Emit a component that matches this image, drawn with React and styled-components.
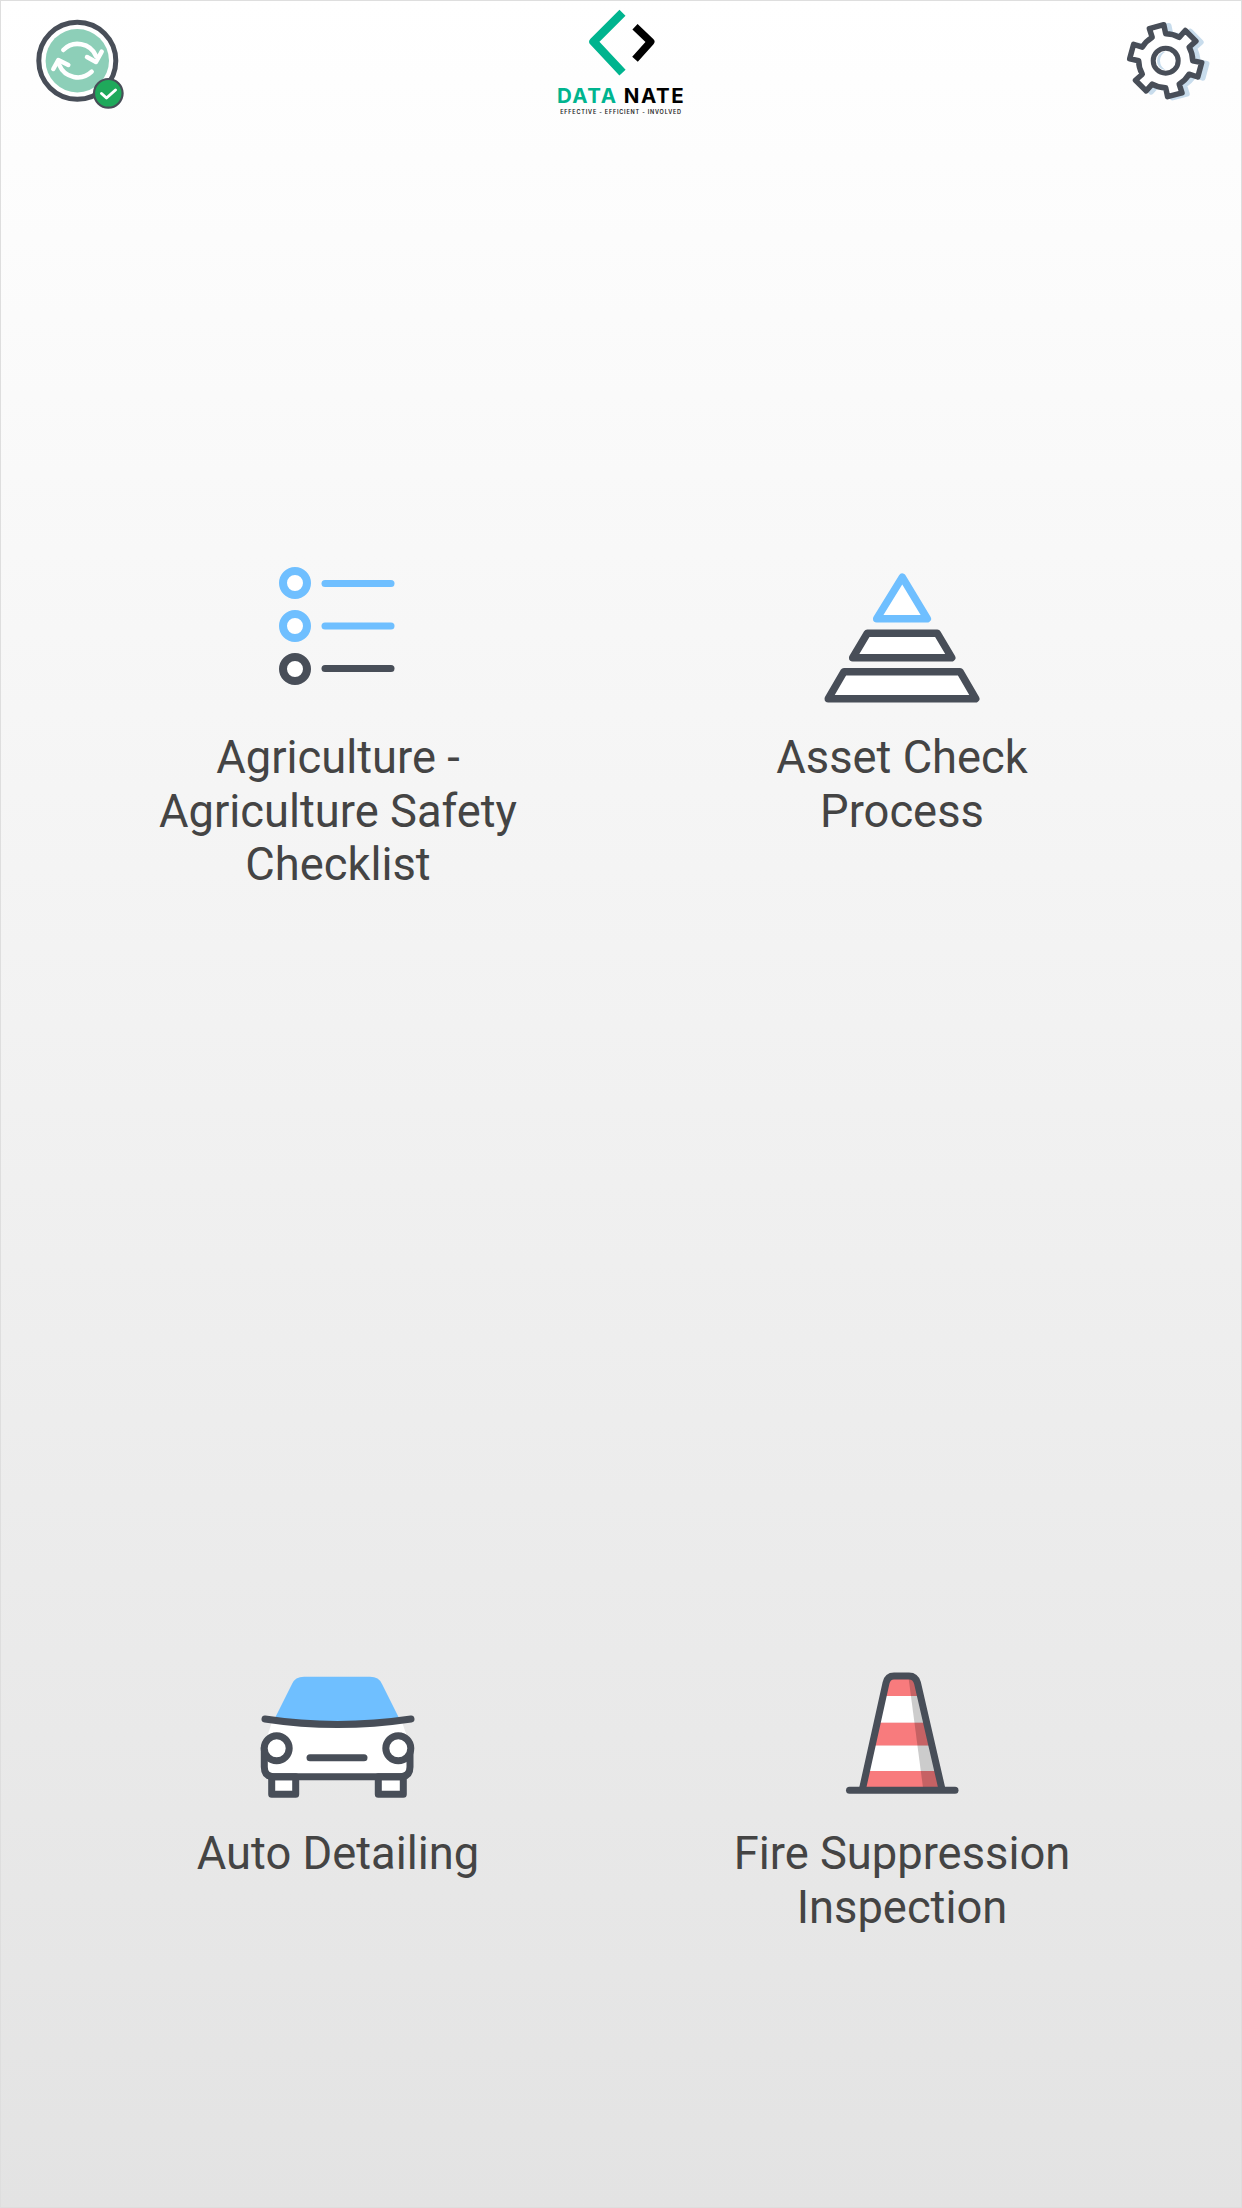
import React from 'react';
import styled, { createGlobalStyle } from 'styled-components';

const DARK = '#484e58';
const BLUE = '#6fbfff';
const RED = '#f87b7d';

const GlobalStyle = createGlobalStyle`
  html, body {
    margin: 0;
    padding: 0;
  }
  body {
    font-family: Roboto, "Liberation Sans", sans-serif;
  }
`;

const Page = styled.div`
  box-sizing: border-box;
  width: 1242px;
  height: 2208px;
  overflow: hidden;
  border: 1px solid #dedede;
  background: linear-gradient(180deg, #ffffff 0%, #e3e3e3 100%);
`;

const Header = styled.header`
  box-sizing: border-box;
  height: 120px;
  padding: 7px 23px 0;
  display: grid;
  grid-template-columns: 1fr auto 1fr;
  align-items: start;
`;

const SettingsIcon = styled.svg`
  justify-self: end;
  display: block;
`;

const SyncIcon = styled.svg`
  display: block;
`;

const Logo = styled.div`
  display: flex;
  flex-direction: column;
  align-items: center;
  width: 126px;
  svg {
    display: block;
  }
`;

const LogoName = styled.div`
  margin-top: 8px;
  font-family: Inter, "Liberation Sans", sans-serif;
  font-size: 20.5px;
  line-height: 16px;
  font-weight: 700;
  letter-spacing: 1.5px;
  white-space: nowrap;
  color: #000;
`;

const LogoAccent = styled.span`
  color: #00b48f;
`;

const LogoTagline = styled.div`
  margin-top: 4px;
  font-family: Inter, "Liberation Sans", sans-serif;
  font-size: 5.5px;
  line-height: 8px;
  font-weight: 600;
  letter-spacing: 0.8px;
  white-space: nowrap;
  color: #222;
`;

const Grid = styled.main`
  padding: 434px 57px 0 55px;
  display: grid;
  grid-template-columns: 1fr 1fr;
  grid-auto-rows: 1096px;
`;

const Item = styled.div`
  display: flex;
  flex-direction: column;
  align-items: center;
  gap: 26px;
  svg {
    display: block;
  }
`;

const Label = styled.div`
  width: 400px;
  text-align: center;
  font-size: 45.3px;
  line-height: 53.5px;
  color: #444444;
`;

// six teeth, drawn from the centre of the gear
const gearPath = (cx, cy) => {
  const pt = (r, deg) => {
    const a = (deg * Math.PI) / 180;
    return `${(cx + r * Math.cos(a)).toFixed(1)} ${(cy + r * Math.sin(a)).toFixed(1)}`;
  };
  let d = '';
  for (let i = 0; i < 6; i++) {
    const a = 15 + i * 60;
    d += `${i === 0 ? 'M' : 'L'}${pt(27, a - 15)} L${pt(36, a - 12)} L${pt(36, a + 12)} L${pt(27, a + 15)} A27 27 0 0 1 ${pt(27, a + 45)} `;
  }
  return d + 'Z';
};

const Gear = () => (
  <SettingsIcon width="100" height="100" viewBox="1118 8 100 100">
    <path d={gearPath(1170.7, 61.7)} fill="#c8dcec" stroke="#c8dcec" strokeWidth="5.5" strokeLinejoin="round" />
    <path d={gearPath(1165.7, 60.7)} fill="#fff" stroke={DARK} strokeWidth="5.5" strokeLinejoin="round" />
    <circle cx="1165.7" cy="60.7" r="12.5" fill="#fff" />
    <path d="M1157 60.7A9 9 0 0 0 1165.7 70A11 11 0 0 1 1160 60.7A11 11 0 0 1 1165.7 51.5A9 9 0 0 0 1157 60.7Z" fill="#c8dcec" />
    <circle cx="1165.7" cy="60.7" r="12.5" fill="none" stroke={DARK} strokeWidth="5" />
  </SettingsIcon>
);

const Sync = () => (
  <SyncIcon width="106" height="104" viewBox="24 8 106 104">
    <circle cx="77.3" cy="60.7" r="38.5" fill="#fff" stroke={DARK} strokeWidth="5" />
    <circle cx="77.3" cy="60.7" r="31.7" fill="#8dcfb8" />
    <g fill="none" stroke="#fff" strokeWidth="4.5" strokeLinecap="round" strokeLinejoin="round">
      <path d="M63.3 50A20 20 0 0 1 96 56" />
      <path d="M87 57L96 62L101.7 51.7" />
      <path d="M91.7 71.7A20 20 0 0 1 59.3 65" />
      <path d="M53.3 69L58.3 60L68.3 65" />
    </g>
    <circle cx="108.3" cy="93.3" r="14.3" fill="#1fa95b" stroke={DARK} strokeWidth="2.2" />
    <path d="M101.5 93.5L106.5 98L115.5 90" fill="none" stroke="#fff" strokeWidth="3" strokeLinecap="round" strokeLinejoin="round" />
  </SyncIcon>
);

const ChecklistIcon = () => (
  <svg width="170" height="150" viewBox="253 555 170 150">
    <g fill="#fff" strokeWidth="8">
      <circle cx="295" cy="583" r="12" stroke={BLUE} />
      <circle cx="295" cy="626" r="12" stroke={BLUE} />
      <circle cx="295" cy="669" r="12" stroke={DARK} />
    </g>
    <g strokeWidth="7" strokeLinecap="round">
      <path d="M325 583.5H391" stroke={BLUE} />
      <path d="M325 626H391" stroke={BLUE} />
      <path d="M325 668.5H391" stroke={DARK} />
    </g>
  </svg>
);

const PyramidIcon = () => (
  <svg width="170" height="150" viewBox="817 555 170 150">
    <g fill="#fff" strokeWidth="7.5" strokeLinejoin="round">
      <path d="M902.3 577.3L927.3 618.7H876.7Z" stroke={BLUE} />
      <path d="M867.3 633.3H937.3L951.7 657.7H852.7Z" stroke={DARK} />
      <path d="M844 671.7H960L975.7 698.7H828.3Z" stroke={DARK} />
    </g>
  </svg>
);

const CarIcon = () => (
  <svg width="170" height="150" viewBox="253 1651 170 150">
    <path d="M275 1718L292 1684Q295 1676.7 304 1676.7H370Q379 1676.7 382 1684L399 1718Q337 1726 275 1718Z" fill={BLUE} />
    <path d="M272 1722Q337 1728 402 1722L410 1745V1776.7H264.3V1745Z" fill="#fff" />
    <g fill="#fff" stroke={DARK} strokeWidth="7" strokeLinejoin="round">
      <rect x="271.7" y="1776.7" width="24" height="17.6" />
      <rect x="378.3" y="1776.7" width="25" height="17.6" />
    </g>
    <g fill="none" stroke={DARK} strokeWidth="7" strokeLinecap="round" strokeLinejoin="round">
      <path d="M264.3 1748V1767Q264.3 1776.7 274 1776.7H400Q410 1776.7 410 1767V1748" />
      <path d="M265 1719Q337 1730 411 1719" />
      <path d="M310 1757.7H364" />
    </g>
    <g fill="#fff" stroke={DARK} strokeWidth="7">
      <circle cx="276.7" cy="1748.3" r="12.5" />
      <circle cx="398.3" cy="1748.3" r="12.5" />
    </g>
  </svg>
);

const ConeIcon = () => (
  <svg width="170" height="150" viewBox="817 1651 170 150">
    <defs>
      <clipPath id="cone-body">
        <path d="M890 1676H913.3L941.7 1787H862.7Z" />
      </clipPath>
    </defs>
    <g clipPath="url(#cone-body)">
      <rect x="850" y="1670" width="100" height="26" fill={RED} />
      <rect x="850" y="1696" width="100" height="26.7" fill="#fff" />
      <rect x="850" y="1722.7" width="100" height="23" fill={RED} />
      <rect x="850" y="1745.7" width="100" height="25.3" fill="#fff" />
      <rect x="850" y="1771" width="100" height="20" fill={RED} />
      <path d="M908.3 1676L923.3 1790H945L915 1676Z" fill="#000" fillOpacity="0.2" />
    </g>
    <g fill="none" stroke={DARK} strokeWidth="7" strokeLinecap="round" strokeLinejoin="round">
      <path d="M862.7 1788L886 1683Q887.5 1676 894 1676H909Q915.5 1676 917.5 1683L941.7 1788" />
      <path d="M849.5 1790.3H955" />
    </g>
  </svg>
);

const items = [
  { id: 'agri', Icon: ChecklistIcon, label: 'Agriculture - Agriculture Safety Checklist' },
  { id: 'asset', Icon: PyramidIcon, label: 'Asset Check Process' },
  { id: 'auto', Icon: CarIcon, label: 'Auto Detailing' },
  { id: 'fire', Icon: ConeIcon, label: 'Fire Suppression Inspection' },
];

const App = () => {
  return (
    <Page>
      <GlobalStyle />
      <Header>
        <Sync />
        <Logo>
          <svg width="124" height="72" viewBox="559 8 124 72">
            <path d="M622.5 12.7L593.5 41.7L622.5 72.7" fill="none" stroke="#00b48f" strokeWidth="8.5" strokeLinejoin="round" />
            <path d="M635 26.7L650.7 41.7L635 59.3" fill="none" stroke="#000" strokeWidth="7.5" strokeLinejoin="round" />
          </svg>
          <LogoName>
            <LogoAccent>DATA</LogoAccent> NATE
          </LogoName>
          <LogoTagline>EFFECTIVE - EFFICIENT - INVOLVED</LogoTagline>
        </Logo>
        <Gear />
      </Header>
      <Grid>
        {items.map(({ id, Icon, label }) => (
          <Item key={id}>
            <Icon />
            <Label>{label}</Label>
          </Item>
        ))}
      </Grid>
    </Page>
  );
};

export default App;
